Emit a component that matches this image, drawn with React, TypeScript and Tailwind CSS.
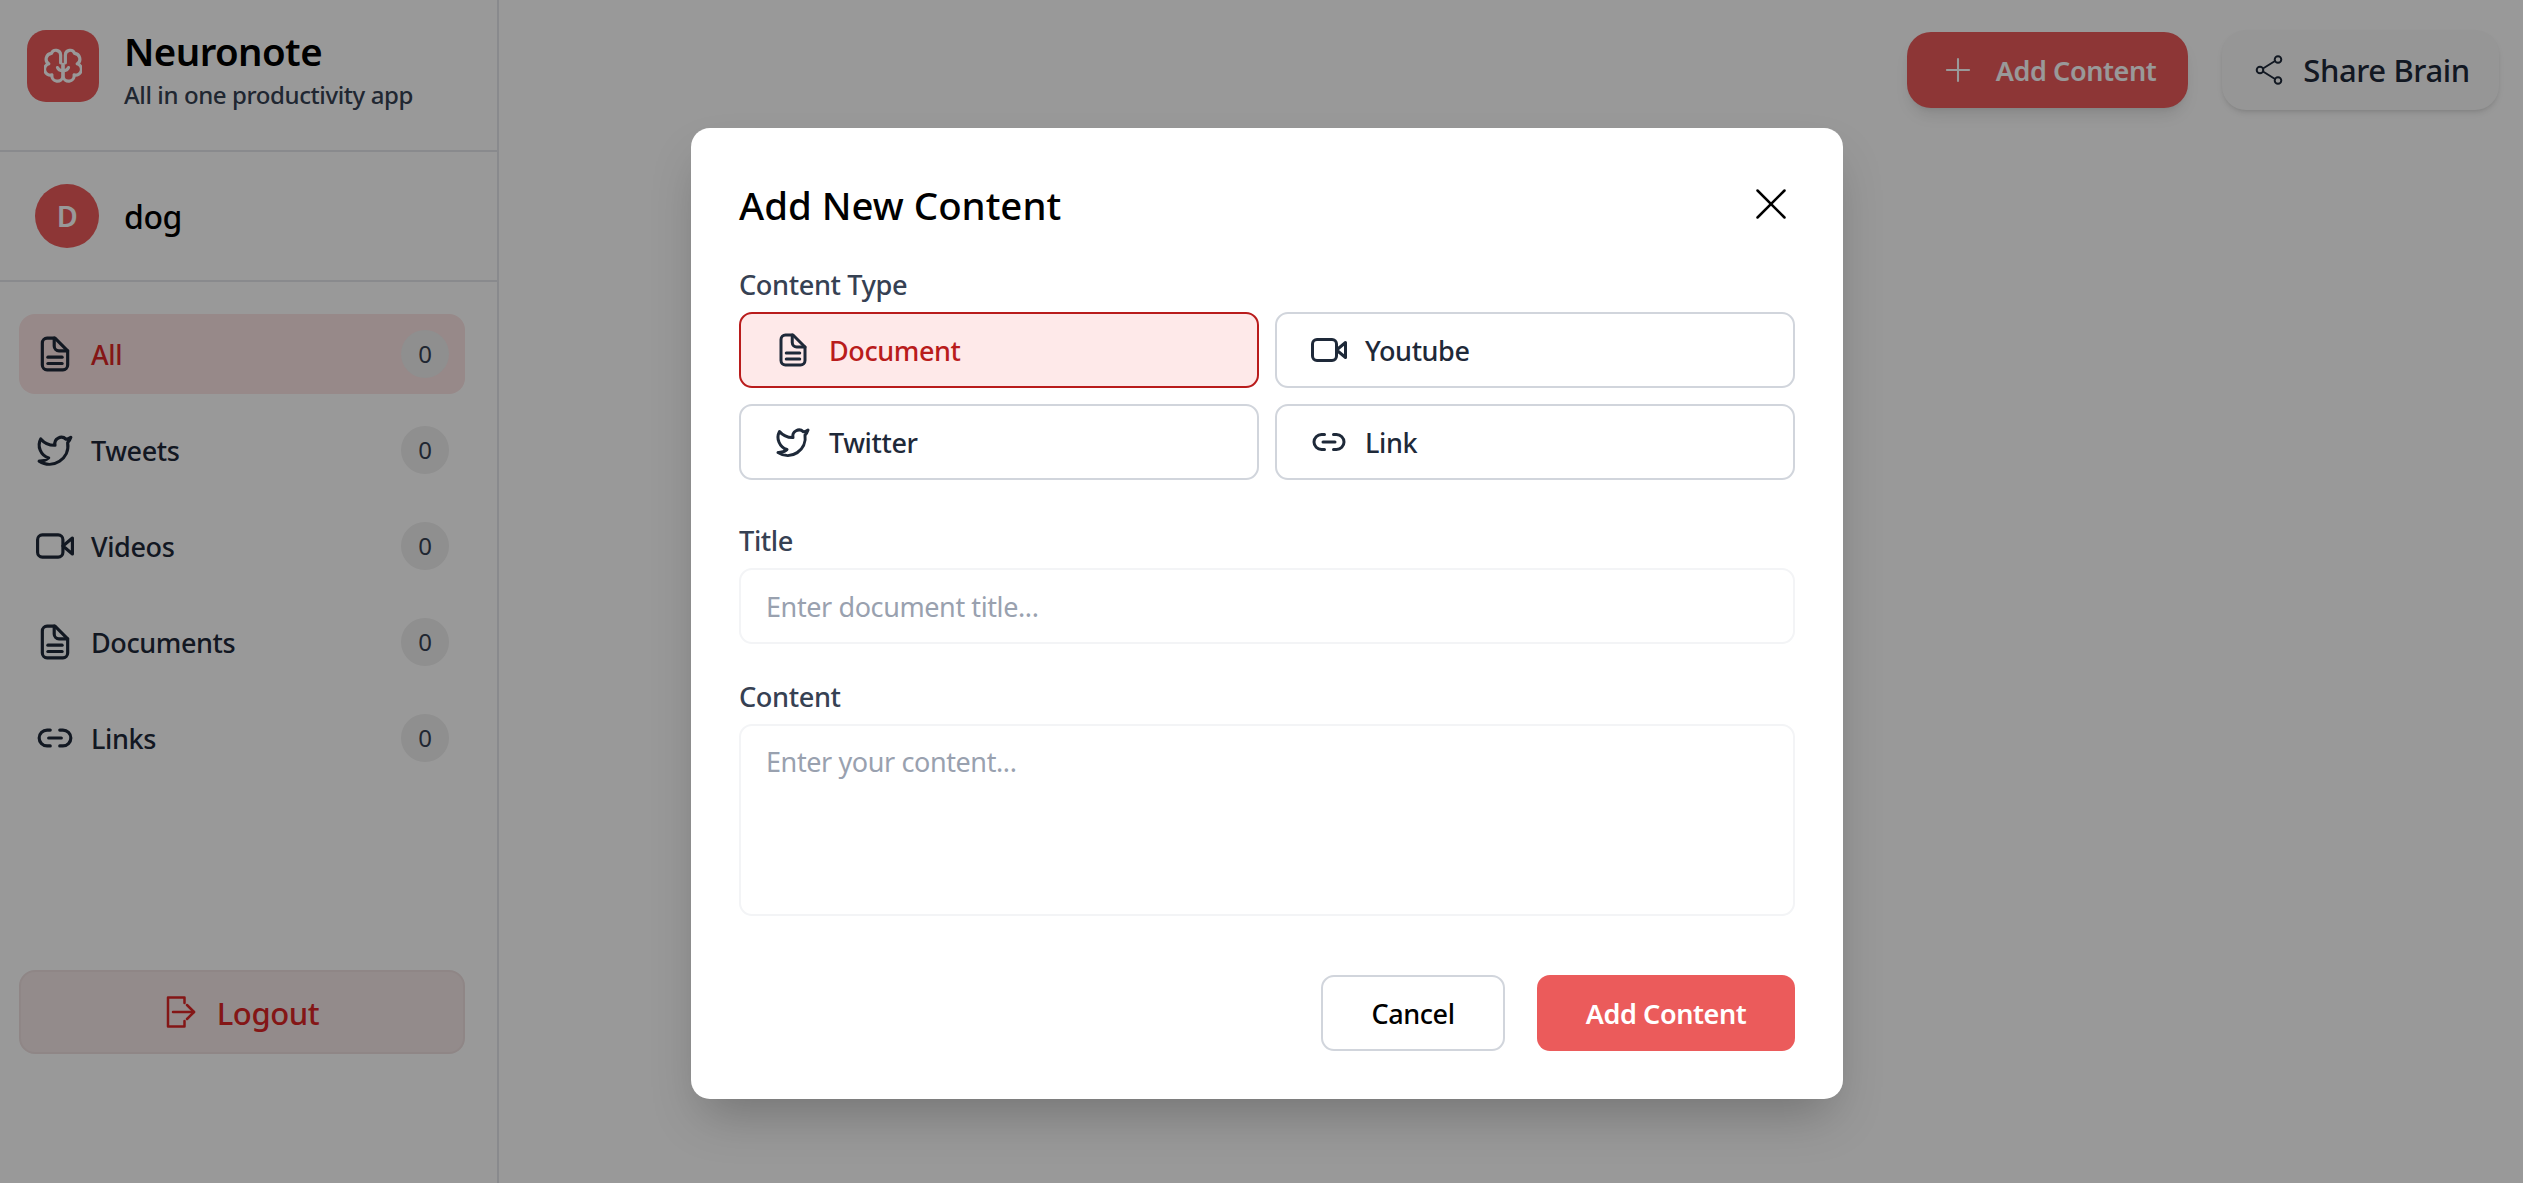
import { Link2, Plus, Twitter, X } from 'lucide-react';
import React from 'react';

type IconProps = { className?: string };

const DocIcon: React.FC<IconProps> = ({ className }) => (
  <svg viewBox="0 0 24 24" fill="none" stroke="currentColor" strokeWidth={2} strokeLinecap="round" strokeLinejoin="round" className={className}>
    <path d="M12 2H7a3 3 0 0 0-3 3v14a3 3 0 0 0 3 3h10a3 3 0 0 0 3-3V10z" />
    <path d="M11.5 2v5a3 3 0 0 0 3 3H20" />
    <path d="M7.5 14h9" />
    <path d="M7.5 18h9" />
  </svg>
);

const VideoIcon: React.FC<IconProps> = ({ className }) => (
  <svg viewBox="0 0 24 24" fill="none" stroke="currentColor" strokeWidth={2} strokeLinecap="round" strokeLinejoin="round" className={className}>
    <rect x="1" y="5" width="16" height="14" rx="3" />
    <path d="M23 7l-6 5 6 5z" />
  </svg>
);

const BrainIcon: React.FC<IconProps> = ({ className }) => {
  const half = (
    <>
      <path d="M10.5 10V5a3 3 0 0 0-5.8-1A3.6 3.6 0 0 0 3 10.6 3.6 3.6 0 0 0 5 17.6 3.4 3.4 0 0 0 12 18.5V11" />
      <path d="M12 15c-1.5 0-3-.5-3.5-2" />
    </>
  );
  return (
    <svg viewBox="0 0 24 24" fill="none" stroke="currentColor" strokeWidth={2} strokeLinecap="round" strokeLinejoin="round" className={className}>
      <g>{half}</g>
      <g transform="matrix(-1 0 0 1 24 0)">{half}</g>
    </svg>
  );
};

const LogoutIcon: React.FC<IconProps> = ({ className }) => (
  <svg viewBox="0 0 32 36" fill="none" stroke="currentColor" strokeWidth={2.5} strokeLinecap="round" strokeLinejoin="round" className={className}>
    <path d="M19.5 9V3.5H3v29h16.5V27" />
    <path d="M8 18h21" />
    <path d="M22 11l7 7-7 7" />
  </svg>
);

const ShareIcon: React.FC<IconProps> = ({ className }) => (
  <svg viewBox="0 0 24 24" fill="none" stroke="currentColor" strokeWidth={1.3} strokeLinecap="round" strokeLinejoin="round" className={className}>
    <circle cx="18" cy="5" r="2.2" />
    <circle cx="6" cy="12" r="2.2" />
    <circle cx="18" cy="19" r="2.2" />
    <path d="M8 11l8-5" />
    <path d="M8 13l8 5" />
  </svg>
);

const navItems = [
  { label: 'All', icon: DocIcon, active: true },
  { label: 'Tweets', icon: Twitter },
  { label: 'Videos', icon: VideoIcon },
  { label: 'Documents', icon: DocIcon },
  { label: 'Links', icon: Link2 },
];

const contentTypes = [
  { label: 'Document', icon: DocIcon, active: true },
  { label: 'Youtube', icon: VideoIcon },
  { label: 'Twitter', icon: Twitter },
  { label: 'Link', icon: Link2 },
];

const Sidebar: React.FC = () => (
  <aside className="w-[499px] h-full shrink-0 border-r-2 border-gray-200 flex flex-col">
    <div className="h-[152px] shrink-0 border-b-2 border-gray-200 pl-[27px] pt-[30px] flex gap-[25px]">
      <div className="w-[72px] h-[72px] rounded-[19px] bg-[#eb5b5b] flex items-center justify-center shrink-0">
        <BrainIcon className="w-[38px] h-[38px] text-white" />
      </div>
      <div>
        <div className="text-[38.4px] leading-[38px] font-semibold tracking-[-0.015em] text-black mt-[2px]">Neuronote</div>
        <div className="text-[24px] leading-[32px] font-medium text-gray-700 mt-[9px]">All in one productivity app</div>
      </div>
    </div>
    <div className="h-[130px] shrink-0 border-b-2 border-gray-200 pl-[35px] flex items-center gap-[25px]">
      <div className="w-16 h-16 rounded-full bg-[#eb5b5b] text-white flex items-center justify-center text-[28.8px] font-semibold">D</div>
      <span className="text-[32px] font-medium text-black pt-[2px]">dog</span>
    </div>
    <nav className="pl-[19px] pr-[32px] pt-[32px] flex flex-col gap-4">
      {navItems.map((item) => (
        <div
          key={item.label}
          className={`h-20 rounded-[16px] pl-[17px] pr-4 flex items-center ${item.active ? 'bg-[#fce4e4]' : ''}`}
        >
          <item.icon className="w-[38px] h-[38px] text-gray-800 shrink-0" />
          <span className={`ml-[17px] pt-[3px] text-[27px] font-medium ${item.active ? 'text-[#dc2626]' : 'text-gray-800'}`}>
            {item.label}
          </span>
          <span className="ml-auto w-12 h-12 rounded-full bg-[#eeeeee] text-gray-700 flex items-center justify-center text-[24px]">
            0
          </span>
        </div>
      ))}
    </nav>
    <div className="mt-auto mb-[129px] ml-[19px] mr-[32px] h-[84px] rounded-[16px] bg-[#f5e8e8] border-2 border-[#eee0e0] flex items-center justify-center gap-[20px]">
      <LogoutIcon className="w-[32px] h-[36px] text-[#dc2626]" />
      <span className="pt-[3px] text-[31px] font-medium text-[#dc2626]">Logout</span>
    </div>
  </aside>
);

const Modal: React.FC = () => (
  <div className="absolute inset-0 bg-black/40 pl-[691px] pt-[128px]">
    <div className="w-[1152px] h-[971px] bg-white rounded-[19px] shadow-2xl px-12 pt-[48px]">
      <div className="flex items-center justify-between h-[56px]">
        <h2 className="mt-[4px] text-[38.4px] font-medium tracking-normal text-black">Add New Content</h2>
        <X className="w-[54px] h-[54px] -mr-[3px] text-black" strokeWidth={1.1} />
      </div>
      <label className="block mt-[34px] text-[27.2px] leading-[38px] font-medium text-gray-700">Content Type</label>
      <div className="mt-[8px] grid grid-cols-2 gap-4">
        {contentTypes.map((type) => (
          <div
            key={type.label}
            className={`h-[76px] rounded-[13px] border-2 pl-[34px] flex items-center gap-[18px] ${
              type.active ? 'border-[#b91c1c] bg-[#fee9e9]' : 'border-gray-300 bg-white'
            }`}
          >
            <type.icon className="w-9 h-9 text-gray-800 shrink-0" />
            <span className={`pt-[3px] text-[27px] font-medium ${type.active ? 'text-[#b91c1c]' : 'text-gray-800'}`}>
              {type.label}
            </span>
          </div>
        ))}
      </div>
      <label className="block mt-[42px] text-[27.2px] leading-[38px] font-medium text-gray-700">Title</label>
      <input
        className="mt-[8px] w-full h-[76px] rounded-[13px] border-2 border-gray-100 px-[25px] text-[27px] placeholder:text-gray-400"
        placeholder="Enter document title..."
      />
      <label className="block mt-[34px] text-[27.2px] leading-[38px] font-medium text-gray-700">Content</label>
      <textarea
        className="block mt-[8px] w-full h-[192px] rounded-[13px] border-2 border-gray-100 px-[25px] py-[16px] text-[27px] resize-none placeholder:text-gray-400"
        placeholder="Enter your content..."
      />
      <div className="mt-[59px] flex justify-end gap-8">
        <button className="w-[184px] h-[76px] pt-[3px] rounded-[13px] border-2 border-gray-300 bg-white text-black text-[27px] font-medium">
          Cancel
        </button>
        <button className="w-[258px] h-[76px] pt-[3px] rounded-[13px] bg-[#eb5b5b] text-white text-[27px] font-semibold">
          Add Content
        </button>
      </div>
    </div>
  </div>
);

export default function App() {
  return (
    <div className="relative w-full h-[1183px] overflow-hidden bg-white flex font-['Noto_Sans','Open_Sans',sans-serif] tracking-[-0.025em]">
      <Sidebar />
      <main className="flex-1 min-w-0 pt-[30px] pr-[24px] flex justify-end items-start gap-[34px]">
        <button className="mt-[2px] w-[281px] h-[76px] rounded-[24px] bg-[#eb5b5b] text-white shadow-lg flex items-center justify-center gap-[19px] text-[27px] font-semibold">
          <Plus className="w-[38px] h-[38px]" strokeWidth={1.3} />
          <span className="pt-[3px]">Add Content</span>
        </button>
        <button className="w-[277px] h-[80px] rounded-[24px] bg-[#fafafa] text-gray-800 shadow-md flex items-center justify-center gap-[16px] text-[31px] font-medium">
          <ShareIcon className="w-9 h-9" />
          Share Brain
        </button>
      </main>
      <Modal />
    </div>
  );
}
